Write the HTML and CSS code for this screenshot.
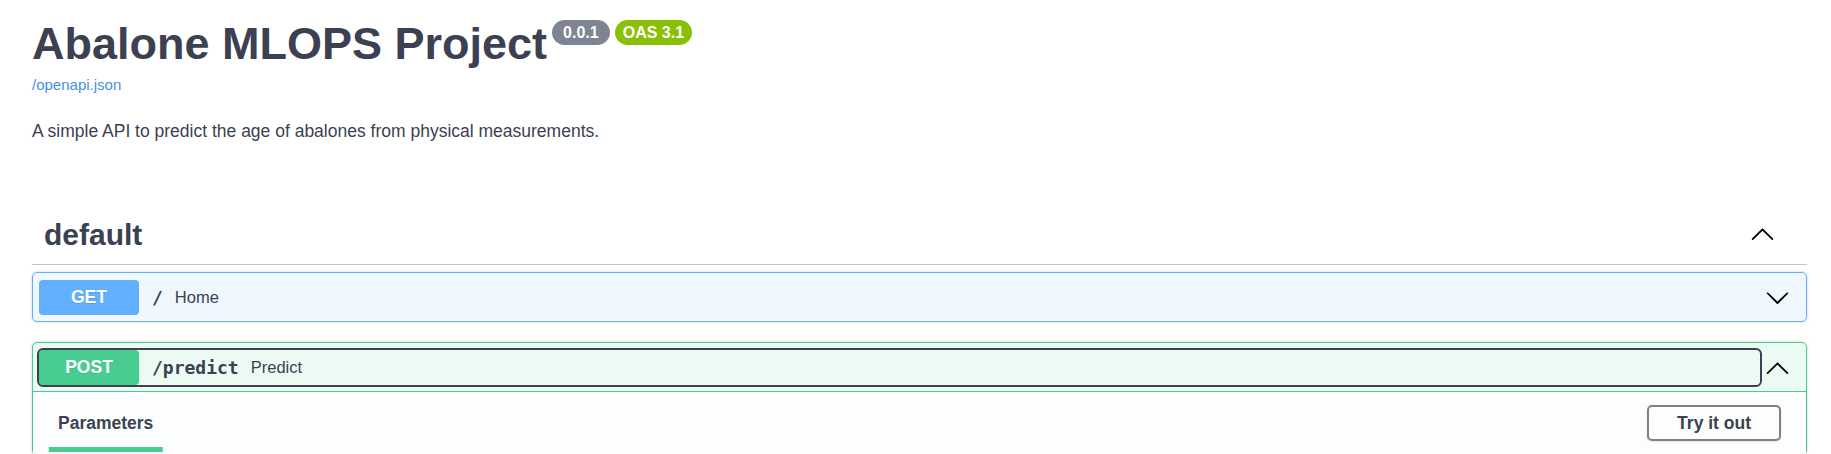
FILE: index.html
```html
<!DOCTYPE html>
<html lang="en">
<head>
<meta charset="utf-8">
<title>Abalone MLOPS Project - Swagger UI</title>
<link rel="stylesheet" href="styles.css">
</head>
<body>
<div class="page">
  <header class="info">
    <div class="title-row">
      <h1 class="title">Abalone MLOPS Project</h1>
      <span class="badge badge-version">0.0.1</span>
      <span class="badge badge-oas">OAS 3.1</span>
    </div>
    <a class="spec-link" href="#">/openapi.json</a>
    <p class="description">A simple API to predict the age of abalones from physical measurements.</p>
  </header>

  <section class="tag-section">
    <div class="tag">
      <h3 class="tag-name">default</h3>
      <button class="tag-toggle" aria-label="Collapse operation">
        <svg class="chev" width="25" height="25" viewBox="0 0 20 20"><path d="M17.418 14.908c.272.268.709.268.979 0s.271-.701 0-.969l-7.908-7.83c-.27-.268-.707-.268-.979 0l-7.908 7.83c-.27.268-.27.701 0 .969.271.268.709.268.979 0L10 7.75l7.418 7.158z"/></svg>
      </button>
    </div>

    <div class="opblock opblock-get">
      <div class="summary">
        <div class="summary-control">
          <span class="method">GET</span>
          <span class="path">/</span>
          <span class="summary-desc">Home</span>
        </div>
        <button class="arrow" aria-label="Expand">
          <svg class="chev" width="25" height="25" viewBox="0 0 20 20"><path d="M17.418 6.109c.272-.268.709-.268.979 0s.271.701 0 .969l-7.908 7.83c-.27.268-.707.268-.979 0l-7.908-7.830c-.27-.268-.27-.701 0-.969.271-.268.709-.268.979 0L10 13.25l7.418-7.141z"/></svg>
        </button>
      </div>
    </div>

    <div class="opblock opblock-post">
      <div class="summary">
        <div class="summary-control focused">
          <span class="method">POST</span>
          <span class="path">/predict</span>
          <span class="summary-desc">Predict</span>
        </div>
        <button class="arrow" aria-label="Collapse">
          <svg class="chev" width="25" height="25" viewBox="0 0 20 20"><path d="M17.418 14.908c.272.268.709.268.979 0s.271-.701 0-.969l-7.908-7.83c-.27-.268-.707-.268-.979 0l-7.908 7.83c-.27.268-.27.701 0 .969.271.268.709.268.979 0L10 7.75l7.418 7.158z"/></svg>
        </button>
      </div>
      <div class="section-header">
        <div class="tab"><h4 class="tab-title"><span>Parameters</span></h4></div>
        <button class="try-out">Try it out</button>
      </div>
    </div>
  </section>
</div>
</body>
</html>
```

FILE: styles.css
```css
* {
  box-sizing: border-box;
}

body {
  margin: 0;
  background: #fff;
  color: #3b4151;
  font-family: "Liberation Sans", Arial, sans-serif;
}

.page {
  padding: 18px 24px 0 32px;
}

.title-row {
  display: flex;
  align-items: flex-start;
}

.title {
  margin: 0;
  font-size: 45px;
  line-height: 52px;
  font-weight: 700;
  color: #3b4151;
}

.badge {
  margin: 2px 0 0 5px;
  height: 25px;
  border-radius: 57px;
  color: #fff;
  font-size: 16px;
  line-height: 25px;
  font-weight: 700;
}

.badge-version {
  background: #7d8492;
  padding: 0 11px;
}

.badge-oas {
  background: #89bf04;
  padding: 0 8px;
}

.spec-link {
  display: block;
  margin-top: 6px;
  font-size: 15px;
  line-height: 18px;
  color: #4990e2;
  text-decoration: none;
}

.description {
  margin: 26px 0 0;
  font-size: 17.5px;
  line-height: 22px;
}

.tag-section {
  margin-top: 63px;
}

.tag {
  display: flex;
  align-items: center;
  padding: 12px 32px 12px 12px;
  border-bottom: 1px solid rgba(59, 65, 81, 0.3);
  margin-bottom: 7px;
}

.tag-name {
  flex: 1;
  margin: 0;
  font-size: 30px;
  line-height: 35px;
  font-weight: 700;
}

.tag-toggle,
.arrow {
  display: flex;
  border: 0;
  background: none;
  cursor: pointer;
}

.tag-toggle {
  padding: 0;
  margin-bottom: 3px;
}

.arrow {
  padding: 0 10px 0 5px;
}

.chev {
  display: block;
  fill: #000;
}

.opblock {
  border: 1px solid;
  border-radius: 5px;
  box-shadow: 0 0 3px rgba(0, 0, 0, 0.19);
  margin-bottom: 20px;
}

.opblock-get {
  border-color: #61affe;
  background: rgba(97, 175, 254, 0.1);
}

.opblock-post {
  border-color: #49cc90;
  background: rgba(73, 204, 144, 0.1);
}

.summary {
  display: flex;
  align-items: center;
  padding: 7px 6px 6px;
}

.opblock-post .summary {
  border-bottom: 1px solid #49cc90;
}

.summary-control {
  flex: 1;
  display: flex;
  align-items: center;
  border-radius: 4px;
}

.summary-control.focused {
  outline: 2px solid #3b4151;
}

.method {
  min-width: 100px;
  padding: 7px 0;
  border-radius: 4px;
  color: #fff;
  font-size: 17.5px;
  line-height: 21px;
  font-weight: 700;
  text-align: center;
  text-shadow: 0 1px 0 rgba(0, 0, 0, 0.1);
}

.opblock-get .method {
  background: #61affe;
}

.opblock-post .method {
  background: #49cc90;
}

.path {
  padding: 0 12px 0 13px;
  font-family: "DejaVu Sans Mono", "Liberation Mono", monospace;
  font-size: 18px;
  font-weight: 700;
  color: #3b4151;
}

.summary-desc {
  font-size: 16.5px;
  color: #3b4151;
}

.section-header {
  display: flex;
  align-items: center;
  justify-content: space-between;
  min-height: 62px;
  padding: 0 25px;
  background: rgba(255, 255, 255, 0.8);
  box-shadow: 0 1px 2px rgba(0, 0, 0, 0.1);
}

.tab-title {
  margin: 0;
  font-size: 17.5px;
  font-weight: 700;
}

.tab-title span {
  position: relative;
}

.tab-title span::after {
  content: "";
  position: absolute;
  left: 50%;
  bottom: -19px;
  width: 120%;
  height: 5px;
  transform: translateX(-50%);
  background: #49cc90;
}

.try-out {
  padding: 6px 28px;
  border: 2px solid gray;
  border-radius: 5px;
  background: transparent;
  box-shadow: 0 1px 2px rgba(0, 0, 0, 0.1);
  color: #3b4151;
  font-family: inherit;
  font-size: 17.5px;
  line-height: 20px;
  font-weight: 700;
}
```
